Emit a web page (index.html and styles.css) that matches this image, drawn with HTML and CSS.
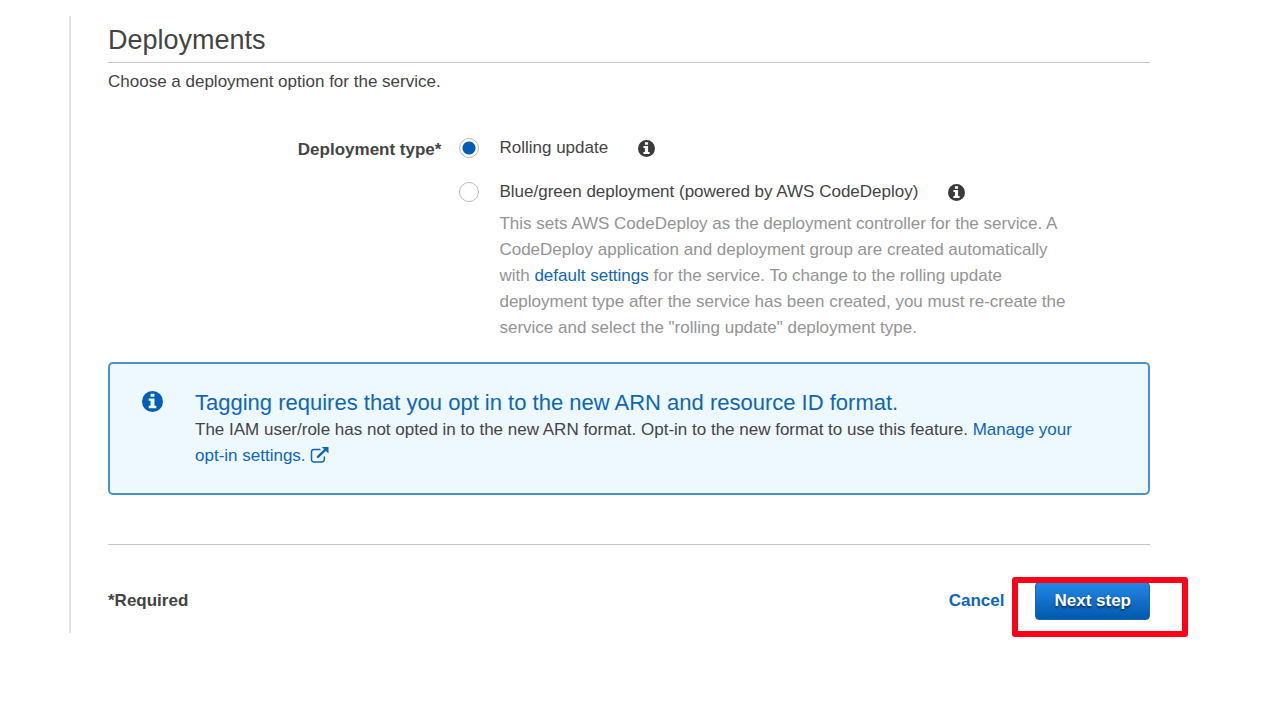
FILE: index.html
```html
<!DOCTYPE html>
<html lang="en">
<head>
<meta charset="utf-8">
<meta name="viewport" content="width=device-width, initial-scale=1">
<title>Deployments</title>
<link rel="stylesheet" href="styles.css">
</head>
<body>
<svg class="sprite" aria-hidden="true">
  <symbol id="info" viewBox="0 0 16 16">
    <path fill-rule="evenodd" d="M8 0a8 8 0 1 1 0 16a8 8 0 0 1 0-16ZM6.5 2v2.4h3V2ZM5.1 5.7v1.8h1.4v3.7H5.1v2h5.8v-2H9.5V5.7Z"/>
  </symbol>
  <symbol id="external" viewBox="0 0 18 16">
    <path d="M10 2.4H3.4a2.4 2.4 0 0 0-2.4 2.4v7.8A2.4 2.4 0 0 0 3.4 15h8a2.4 2.4 0 0 0 2.4-2.4V9.4" fill="none" stroke="currentColor" stroke-width="1.5"/>
    <path d="M7.4 9.8 15 2.6" fill="none" stroke="currentColor" stroke-width="2.4" stroke-linecap="round"/>
    <path d="M11.2 0H18v6.6Z"/>
  </symbol>
</svg>
<main class="panel">
  <form class="wizard">
    <h2 class="section-title">Deployments</h2>
    <p class="section-intro">Choose a deployment option for the service.</p>

    <div class="field" role="radiogroup" aria-labelledby="type-label">
      <span class="field-label" id="type-label">Deployment type*</span>
      <div class="options">
        <div class="option">
          <input class="radio" type="radio" name="type" id="rolling" checked>
          <label for="rolling">Rolling update</label>
          <button class="info-button" type="button" aria-label="About rolling update"><svg class="icon"><use href="#info"/></svg></button>
        </div>
        <div class="option">
          <input class="radio" type="radio" name="type" id="blue-green">
          <label for="blue-green">Blue/green deployment (powered by AWS CodeDeploy)</label>
          <button class="info-button" type="button" aria-label="About blue/green deployment"><svg class="icon"><use href="#info"/></svg></button>
        </div>
        <p class="hint">This sets AWS CodeDeploy as the deployment controller for the service. A CodeDeploy application and deployment group are created automatically with <a class="link" href="#">default settings</a> for the service. To change to the rolling update deployment type after the service has been created, you must re-create the service and select the "rolling update" deployment type.</p>
      </div>
    </div>

    <section class="notice">
      <svg class="notice-icon" aria-hidden="true"><use href="#info"/></svg>
      <div>
        <h3 class="notice-title">Tagging requires that you opt in to the new ARN and resource ID format.</h3>
        <p class="notice-text">The IAM user/role has not opted in to the new ARN format. Opt-in to the new format to use this feature. <a class="link" href="#">Manage your opt-in settings. <svg class="external-icon" aria-hidden="true"><use href="#external"/></svg></a></p>
      </div>
    </section>

    <footer class="actions">
      <span class="required">*Required</span>
      <a class="link cancel" href="#">Cancel</a>
      <div class="next">
        <button class="primary" type="submit">Next step</button>
        <span class="highlight"></span>
      </div>
    </footer>
  </form>
</main>
</body>
</html>
```
FILE: styles.css
```css
* { box-sizing: border-box; }

body {
  margin: 0;
  padding: 16px 118px 16px 69px;
  background: #fff;
  color: #444;
  font: 17px/26px "Liberation Sans", Arial, sans-serif;
}

h2, h3, p { margin: 0; font-weight: 400; }

.sprite { display: none; }

.panel {
  padding: 8px 0 13px 37px;
  border-left: 2px solid #e4e4e4;
}

.section-title {
  padding-bottom: 6px;
  border-bottom: 1px solid #c4c4c4;
  font-size: 27px;
  line-height: 32px;
}

.section-intro { margin-top: 6px; }

.field {
  display: grid;
  grid-template-columns: 32% 1fr;
  column-gap: 18px;
  margin-top: 40px;
}

.field-label { padding-top: 2px; font-weight: 700; text-align: right; }

.option {
  display: flex;
  align-items: center;
}

.option + .option { margin-top: 18px; }

.radio {
  appearance: none;
  width: 20px;
  height: 20px;
  margin: 0 20px 0 0;
  border: 1px solid #bbb;
  border-radius: 50%;
  background: #fff;
}

.radio:checked { background: radial-gradient(circle, #005fb4 6px, #fff 7px); }

.info-button {
  display: flex;
  margin-left: 30px;
  padding: 0;
  border: 0;
  background: none;
  color: #3a3a3a;
}

.icon { width: 17px; height: 17px; fill: currentColor; }

.hint {
  max-width: 618px;
  margin-top: 6px;
  padding-left: 40px;
  color: #949494;
}

.link { color: #0f66b7; text-decoration: none; }

.notice {
  display: flex;
  gap: 32px;
  margin-top: 21px;
  padding: 25px 48px 24px 32px;
  border: 2px solid #4a90ca;
  border-radius: 5px;
  background: #edf8ff;
}

.notice-icon {
  flex: none;
  width: 21px;
  height: 21px;
  margin-top: 2px;
  fill: #005fb4;
}

.notice-title { color: #0f66b7; font-size: 22px; line-height: 28px; }

.external-icon {
  width: 19px;
  height: 16px;
  fill: currentColor;
  vertical-align: -2px;
}

.actions {
  display: flex;
  align-items: center;
  margin-top: 49px;
  padding-top: 37px;
  border-top: 1px solid #c4c4c4;
  font-weight: 700;
}

.required { margin-right: auto; }

.next { position: relative; margin-left: 31px; }

.primary {
  display: block;
  padding: 5px 18px;
  border: 1px solid #1c65ad;
  border-radius: 4px;
  background: linear-gradient(#2387e8, #0259ac);
  color: #fff;
  font: inherit;
  text-shadow: 0 2px 2px rgba(0, 0, 0, 0.5);
}

.highlight {
  position: absolute;
  inset: -5px -38px -17px -23px;
  border: 6px solid #ff0019;
  border-radius: 3px;
  pointer-events: none;
}
```
